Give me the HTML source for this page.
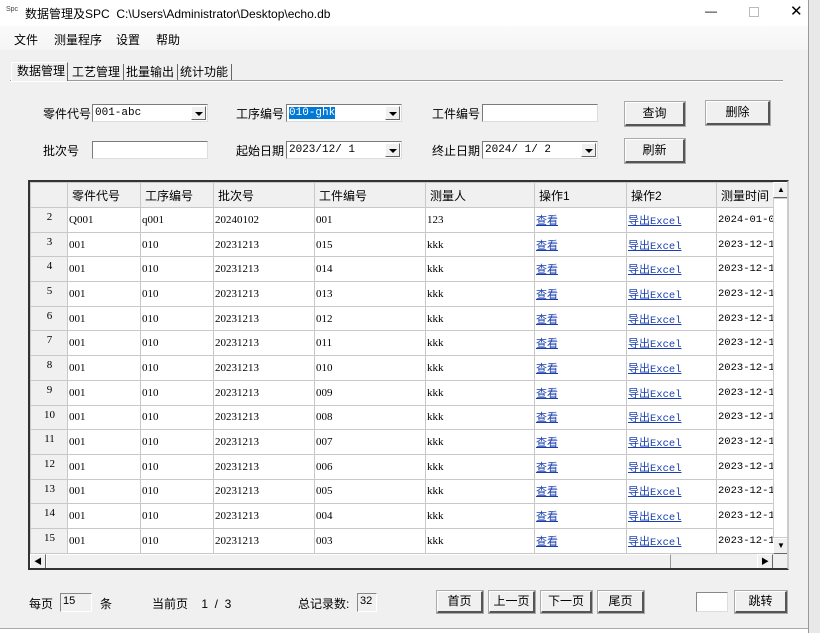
<!DOCTYPE html>
<html><head><meta charset="utf-8">
<style>
*{box-sizing:border-box;margin:0;padding:0}
body{width:820px;height:633px;overflow:hidden;background:#f0f0f0;font-family:"Liberation Sans","Noto Sans CJK SC",sans-serif;font-size:12px;color:#000;position:relative}
.a{position:absolute}
.title{left:0;top:0;width:808px;height:26px;background:#fff}
.menu{left:0;top:26px;width:808px;height:24px;background:linear-gradient(#fafafa,#f5f5f5)}
.right{left:808px;top:0;width:12px;height:633px;background:#e8e8e8;border-left:1px solid #999}
.inp{background:#fff;border:1px solid #7a7a7a;border-right-color:#ddd;border-bottom-color:#ddd;height:18px;font-family:"Liberation Mono","Noto Sans CJK SC",monospace;font-size:11px;line-height:16px;padding-left:2px}
.dd{position:absolute;right:1px;top:1px;width:15px;height:14px;background:#f0f0f0;border:1px solid #fff;border-right-color:#666;border-bottom-color:#666}
.dd:after{content:"";position:absolute;left:3px;top:5px;border-left:4px solid transparent;border-right:4px solid transparent;border-top:4px solid #000}
.btn{background:#f0f0f0;border:1px solid #fff;border-right:2px solid #555;border-bottom:2px solid #555;text-align:center;font-size:12px;outline:1px solid #aaa}
.lbl{font-size:12px}
table{border-collapse:collapse;table-layout:fixed;font-size:11px;font-family:"Liberation Serif","Noto Sans CJK SC",serif}
td{border:1px solid #c8c8c8;height:24.7px;padding-left:1px;white-space:nowrap;overflow:hidden;background:#fff}
td.h{background:#f0f0f0;text-align:center;font-size:11px;vertical-align:top;padding-top:3px}
tr.hd td{background:#f0f0f0;font-family:"Liberation Sans","Noto Sans CJK SC",sans-serif;font-size:12px;padding-left:4px;height:25px}
a{color:#1a3fb0;text-decoration:underline}
.mono{font-family:"Liberation Mono",monospace;font-size:10.5px}
</style></head><body>
<div class="a title"></div>
<div class="a" style="left:6px;top:6px;font-size:7px;color:#444">Spc</div>
<div class="a" style="left:25px;top:5px;font-size:12px">数据管理及SPC&nbsp; C:\Users\Administrator\Desktop\echo.db</div>
<div class="a" style="left:705px;top:4px;font-size:12px">—</div>
<div class="a" style="left:749px;top:7px;width:10px;height:10px;border:1px solid #bbb"></div>
<div class="a" style="left:790px;top:2px;font-size:15px">✕</div>
<div class="a menu"></div>
<div class="a" style="left:14px;top:31px">文件</div>
<div class="a" style="left:54px;top:31px">测量程序</div>
<div class="a" style="left:116px;top:31px">设置</div>
<div class="a" style="left:156px;top:31px">帮助</div>
<div class="a right"></div>
<!-- tabs -->
<div class="a" style="left:10px;top:80px;width:773px;height:1px;background:#999"></div>
<div class="a" style="left:10px;top:81px;width:773px;height:1px;background:#fff"></div>
<div class="a" style="left:11px;top:62px;width:57px;height:19px;background:#f0f0f0;border:1px solid #fff;border-right:1px solid #666;border-bottom:none;padding-left:5px;line-height:17px">数据管理</div>
<div class="a" style="left:69px;top:64px;border-right:1px solid #666;padding:0 3px;line-height:16px">工艺管理</div>
<div class="a" style="left:123px;top:64px;border-right:1px solid #666;padding:0 3px;line-height:16px">批量输出</div>
<div class="a" style="left:177px;top:64px;border-right:1px solid #666;padding:0 3px;line-height:16px">统计功能</div>
<!-- form -->
<div class="a lbl" style="left:43px;top:105px">零件代号</div>
<div class="a inp" style="left:92px;top:104px;width:116px">001-abc<span class="dd"></span></div>
<div class="a lbl" style="left:236px;top:105px">工序编号</div>
<div class="a inp" style="left:286px;top:104px;width:116px"><span style="background:#0078d7;color:#fff">010-ghk</span><span class="dd"></span></div>
<div class="a lbl" style="left:432px;top:105px">工件编号</div>
<div class="a inp" style="left:482px;top:104px;width:116px"></div>
<div class="a btn" style="left:625px;top:102px;width:60px;height:24px;line-height:21px">查询</div>
<div class="a btn" style="left:706px;top:101px;width:64px;height:24px;line-height:21px">删除</div>
<div class="a lbl" style="left:43px;top:142px">批次号</div>
<div class="a inp" style="left:92px;top:141px;width:116px"></div>
<div class="a lbl" style="left:236px;top:142px">起始日期</div>
<div class="a inp" style="left:286px;top:141px;width:116px">2023/12/ 1<span class="dd"></span></div>
<div class="a lbl" style="left:432px;top:142px">终止日期</div>
<div class="a inp" style="left:482px;top:141px;width:116px">2024/ 1/ 2<span class="dd"></span></div>
<div class="a btn" style="left:625px;top:139px;width:60px;height:24px;line-height:21px">刷新</div>
<!-- grid -->
<div class="a" style="left:28px;top:180px;width:761px;height:390px;border:2px solid #333;border-right-color:#ccc;border-bottom-color:#333;background:#f0f0f0;overflow:hidden">
<div class="a" style="left:0;top:0;width:743px;height:372px;overflow:hidden">
<table style="width:830px">
<colgroup><col style="width:37px"><col style="width:73px"><col style="width:73px"><col style="width:101px"><col style="width:111px"><col style="width:109px"><col style="width:92px"><col style="width:90px"><col style="width:144px"></colgroup>
<tr class="hd"><td></td><td>零件代号</td><td>工序编号</td><td>批次号</td><td>工件编号</td><td>测量人</td><td>操作1</td><td>操作2</td><td>测量时间</td></tr>
<tr><td class="h">2</td><td>Q001</td><td>q001</td><td>20240102</td><td>001</td><td>123</td><td><a>查看</a></td><td><a>导出<span class="mono">Excel</span></a></td><td class="mono">2024-01-02</td></tr>
<tr><td class="h">3</td><td>001</td><td>010</td><td>20231213</td><td>015</td><td>kkk</td><td><a>查看</a></td><td><a>导出<span class="mono">Excel</span></a></td><td class="mono">2023-12-13</td></tr>
<tr><td class="h">4</td><td>001</td><td>010</td><td>20231213</td><td>014</td><td>kkk</td><td><a>查看</a></td><td><a>导出<span class="mono">Excel</span></a></td><td class="mono">2023-12-13</td></tr>
<tr><td class="h">5</td><td>001</td><td>010</td><td>20231213</td><td>013</td><td>kkk</td><td><a>查看</a></td><td><a>导出<span class="mono">Excel</span></a></td><td class="mono">2023-12-13</td></tr>
<tr><td class="h">6</td><td>001</td><td>010</td><td>20231213</td><td>012</td><td>kkk</td><td><a>查看</a></td><td><a>导出<span class="mono">Excel</span></a></td><td class="mono">2023-12-13</td></tr>
<tr><td class="h">7</td><td>001</td><td>010</td><td>20231213</td><td>011</td><td>kkk</td><td><a>查看</a></td><td><a>导出<span class="mono">Excel</span></a></td><td class="mono">2023-12-13</td></tr>
<tr><td class="h">8</td><td>001</td><td>010</td><td>20231213</td><td>010</td><td>kkk</td><td><a>查看</a></td><td><a>导出<span class="mono">Excel</span></a></td><td class="mono">2023-12-13</td></tr>
<tr><td class="h">9</td><td>001</td><td>010</td><td>20231213</td><td>009</td><td>kkk</td><td><a>查看</a></td><td><a>导出<span class="mono">Excel</span></a></td><td class="mono">2023-12-13</td></tr>
<tr><td class="h">10</td><td>001</td><td>010</td><td>20231213</td><td>008</td><td>kkk</td><td><a>查看</a></td><td><a>导出<span class="mono">Excel</span></a></td><td class="mono">2023-12-13</td></tr>
<tr><td class="h">11</td><td>001</td><td>010</td><td>20231213</td><td>007</td><td>kkk</td><td><a>查看</a></td><td><a>导出<span class="mono">Excel</span></a></td><td class="mono">2023-12-13</td></tr>
<tr><td class="h">12</td><td>001</td><td>010</td><td>20231213</td><td>006</td><td>kkk</td><td><a>查看</a></td><td><a>导出<span class="mono">Excel</span></a></td><td class="mono">2023-12-13</td></tr>
<tr><td class="h">13</td><td>001</td><td>010</td><td>20231213</td><td>005</td><td>kkk</td><td><a>查看</a></td><td><a>导出<span class="mono">Excel</span></a></td><td class="mono">2023-12-13</td></tr>
<tr><td class="h">14</td><td>001</td><td>010</td><td>20231213</td><td>004</td><td>kkk</td><td><a>查看</a></td><td><a>导出<span class="mono">Excel</span></a></td><td class="mono">2023-12-13</td></tr>
<tr><td class="h">15</td><td>001</td><td>010</td><td>20231213</td><td>003</td><td>kkk</td><td><a>查看</a></td><td><a>导出<span class="mono">Excel</span></a></td><td class="mono">2023-12-13</td></tr>
</table></div>
<!-- vscroll -->
<div class="a" style="left:743px;top:0;width:16px;height:372px;background:#f0f0f0">
<div class="a" style="left:0;top:0;width:16px;height:16px;border:1px solid #fff;border-right-color:#666;border-bottom-color:#666;font-size:8px;text-align:center;line-height:13px">▲</div>
<div class="a" style="left:0;top:16px;width:16px;height:340px;background:#fff;border:1px solid #ccc;border-right-color:#666"></div>
<div class="a" style="left:0;top:356px;width:16px;height:16px;border:1px solid #fff;border-right-color:#666;border-bottom-color:#666;font-size:8px;text-align:center;line-height:13px">▼</div>
</div>
<!-- hscroll -->
<div class="a" style="left:0;top:372px;width:743px;height:16px;background:#f0f0f0">
<div class="a" style="left:0;top:0;width:16px;height:16px;border:1px solid #fff;border-right-color:#666;border-bottom-color:#666;font-size:8px;text-align:center;line-height:14px">◀</div>
<div class="a" style="left:16px;top:0;width:625px;height:16px;background:#f0f0f0;border:1px solid #fff;border-right-color:#999;border-bottom-color:#999"></div>
<div class="a" style="left:727px;top:0;width:16px;height:16px;border:1px solid #fff;border-right-color:#666;border-bottom-color:#666;font-size:8px;text-align:center;line-height:14px">▶</div>
</div>
</div>
<!-- footer -->
<div class="a lbl" style="left:29px;top:595px">每页</div>
<div class="a" style="left:60px;top:593px;width:32px;height:19px;border:1px solid #888;border-right-color:#fff;border-bottom-color:#fff;font-size:11px;padding:1px 2px">15</div>
<div class="a lbl" style="left:100px;top:595px">条</div>
<div class="a lbl" style="left:152px;top:595px">当前页&nbsp;&nbsp;&nbsp; 1&nbsp; /&nbsp; 3</div>
<div class="a lbl" style="left:298px;top:595px">总记录数:</div>
<div class="a" style="left:357px;top:593px;width:20px;height:19px;border:1px solid #888;border-right-color:#fff;border-bottom-color:#fff;font-size:11px;padding:1px 2px">32</div>
<div class="a btn" style="left:437px;top:591px;width:46px;height:22px;line-height:19px">首页</div>
<div class="a btn" style="left:489px;top:591px;width:46px;height:22px;line-height:19px">上一页</div>
<div class="a btn" style="left:541px;top:591px;width:51px;height:22px;line-height:19px">下一页</div>
<div class="a btn" style="left:598px;top:591px;width:46px;height:22px;line-height:19px">尾页</div>
<div class="a" style="left:696px;top:592px;width:32px;height:20px;background:#fff;border:1px solid #888;border-right-color:#ddd;border-bottom-color:#ddd"></div>
<div class="a btn" style="left:735px;top:591px;width:52px;height:22px;line-height:19px">跳转</div>
<div class="a" style="left:0;top:628px;width:808px;height:5px;background:#fff;border-top:1px solid #aaa"></div>
</body></html>
